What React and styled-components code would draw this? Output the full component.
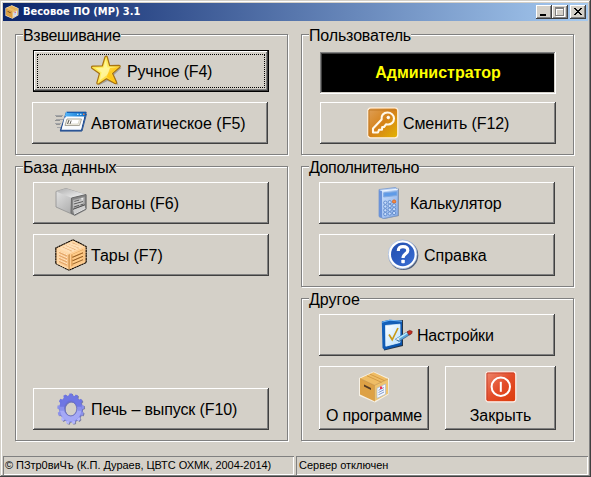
import React from "react";
import styled, { createGlobalStyle, css } from "styled-components";

const Global = createGlobalStyle`
  html, body { margin: 0; padding: 0; background: #d4d0c8; overflow: hidden; }
  * { box-sizing: border-box; }
`;

const Window = styled.div`
  width: 591px;
  height: 477px;
  padding: 3px;
  display: flex;
  flex-direction: column;
  background: #d4d0c8;
  color: #000;
  font-family: "Liberation Sans", Arial, sans-serif;
  font-size: 16px;
  line-height: 18px;
  white-space: nowrap;
  box-shadow: inset -1px -1px 0 #404040, inset 1px 1px 0 #d4d0c8,
    inset -2px -2px 0 #808080, inset 2px 2px 0 #fff;
`;

const TitleBar = styled.header`
  height: 18px;
  flex: none;
  display: flex;
  align-items: center;
  padding: 0 2px;
  background: linear-gradient(to right, #0a246a, #a6caf0);
`;

const Title = styled.h1`
  margin: 0 auto 0 4px;
  color: #fff;
  font: bold 11px/18px "DejaVu Sans Condensed", "DejaVu Sans", sans-serif;
  font-stretch: condensed;
`;

const raised = css`
  box-shadow: inset -1px -1px 0 #404040, inset 1px 1px 0 #fff, inset -2px -2px 0 #808080;
`;

const CaptionButton = styled.button`
  width: 16px;
  height: 14px;
  padding: 0;
  border: 0;
  margin-left: ${(p) => p.$gap || 0}px;
  background: #d4d0c8;
  display: flex;
  ${raised}
`;

const Body = styled.main`
  flex: 1;
  display: grid;
  grid-template-columns: 273px 273px;
  column-gap: 13px;
  padding: 13px 0 15px 12px;
`;

const Column = styled.div`
  display: flex;
  flex-direction: column;
  gap: 11px;
`;

const Group = styled.section`
  height: ${(p) => p.$h}px;
  display: flex;
  flex-direction: column;
  align-items: flex-start;
  border: 1px solid #808080;
  box-shadow: 1px 1px 0 #fff, inset 1px 1px 0 #fff;
  padding: 0 0 10px ${(p) => p.$left || 17}px;
`;

const GroupCaption = styled.h2`
  margin: -8px 0 5px ${(p) => p.$shift ?? -10}px;
  font-size: 16px;
  font-weight: normal;
  line-height: 18px;
  background: #d4d0c8;
  letter-spacing: ${(p) => p.$ls || 0}px;
`;

const PushButton = styled.button`
  width: 236px;
  height: 42px;
  flex: none;
  display: flex;
  align-items: center;
  gap: ${(p) => p.$gap || 4}px;
  border: 0;
  padding: 0 0 0 ${(p) => p.$pad}px;
  margin: ${(p) => p.$mt || 0} 0 0 ${(p) => p.$ml || 0}px;
  background: #d4d0c8;
  color: #000;
  font: inherit;
  letter-spacing: ${(p) => p.$ls || 0}px;
  ${raised}
  ${(p) =>
    p.$default &&
    css`
      border: 1px solid #000;
      outline: 1px dotted #000;
      outline-offset: -5px;
    `}
`;

const ButtonText = styled.span`
  padding-top: 2px;
`;

const TileButton = styled(PushButton)`
  width: ${(p) => p.$w}px;
  height: 64px;
  flex-direction: column;
  gap: 2px;
  padding: 5px 0 0;
`;

const TileRow = styled.div`
  display: flex;
  gap: 16px;
  margin-top: 10px;
`;

const UserPanel = styled.output`
  width: 236px;
  height: 42px;
  margin: 2px 0 8px;
  display: flex;
  align-items: center;
  justify-content: center;
  background: #000;
  color: #ff0;
  font-weight: bold;
  box-shadow: inset -1px -1px 0 #fff, inset 1px 1px 0 #808080,
    inset -2px -2px 0 #d4d0c8, inset 2px 2px 0 #404040;
`;

const StatusBar = styled.footer`
  height: 18px;
  flex: none;
  display: grid;
  grid-template-columns: 291px 1fr;
  column-gap: 2px;
  font-size: 11px;
`;

const StatusCell = styled.span`
  padding-left: ${(p) => p.$pad}px;
  line-height: 19px;
  letter-spacing: ${(p) => p.$ls || 0}px;
  box-shadow: inset 1px 1px 0 #808080, inset -1px -1px 0 #fff;
`;

const IconSvg = styled.svg`
  flex: none;
  display: block;
`;

const Icon = ({ size = 32, children }) => (
  <IconSvg width={size} height={size} viewBox="0 0 32 32" aria-hidden="true">
    {children}
  </IconSvg>
);

const Gradient = ({ id, from, mid, to, x2 = 1, y2 = 1 }) => (
  <linearGradient id={id} x1="0" y1="0" x2={x2} y2={y2}>
    <stop offset="0" stopColor={from} />
    {mid && <stop offset=".5" stopColor={mid} />}
    <stop offset="1" stopColor={to} />
  </linearGradient>
);

const StarIcon = () => (
  <Icon>
    <defs><Gradient id="star" from="#ffe53c" mid="#ffee60" to="#ffb400" /></defs>
    <path d="M17 2.5 21 12 31.5 12.8 24 20 28.5 30 17.5 26 8.5 30.5 10 20 3 14 13 13Z" fill="#777" opacity=".55" />
    <path d="M15.8 1.2Q16.8 .8 17.3 2L19.6 10.6 29 10.4Q31 10.8 29.8 12.2L22.6 18.4 26.6 27.2Q26.8 29.2 24.8 28.4L16.5 23.8 8.6 29Q6.6 29.4 6.9 27.6L9.4 18.6 1.8 13.2Q.8 11.4 2.8 11.1L12.3 11 15 2Z" fill="url(#star)" stroke="#a87310" strokeWidth="1.2" strokeLinejoin="round" />
    <path d="M15.8 4 17.4 12.4 26 12.4 19 17.2 16.5 20.5 9.6 25.6 11.6 17.6 5.4 13 13.6 12.8Z" fill="#fffbc0" opacity=".6" />
    <path d="M20 13 28 12.2 21.2 18.4 24.8 26.8 16.8 22Z" fill="#ffc30d" opacity=".75" />
  </Icon>
);

const WindowIcon = () => (
  <Icon>
    <defs><Gradient id="winbar" from="#55b7fb" to="#086bc5" y2={0} /></defs>
    <path d="M0 8.5h8M1 12.5h7M0 16.5h6M2 20.5h4" stroke="#a3a5a8" strokeWidth="1" />
    <path d="M1 9.5h6M0 13.5h5M1 17.5h4" stroke="#74777b" strokeWidth=".7" />
    <path d="M11.5 5.5H31L26.5 23.5H5.5Z" fill="#fff" stroke="#204c93" strokeWidth="1.3" strokeLinejoin="round" />
    <path d="M11 5H31L29.8 9.5H9.7Z" fill="url(#winbar)" />
    <path d="M12 5.4H31" stroke="#1459ad" />
    <path d="M22 7.3h1.5M25 7.3h1.5" stroke="#bde5ff" strokeWidth="1.3" />
    <path d="M28 7.3h1.5" stroke="#f47945" strokeWidth="1.5" />
    <path d="M9.5 10.5H28.8L26 22H7Z" fill="#f9fbfd" />
    <path d="M12 12H26.5L24.5 18.5H10Z" fill="#f1eee2" stroke="#aaa79c" />
    <path d="M14.5 12.5H24.5L23 17H13Z" fill="#fff" stroke="#d0cdbd" strokeWidth=".7" />
    <path d="M12.5 17 14 13M15 17 16.2 13.5" stroke="#625f59" />
    <path d="M5 24H27L31.5 7" fill="none" stroke="#365f98" />
  </Icon>
);

const ServerIcon = () => (
  <Icon>
    <defs>
      <Gradient id="srvside" from="#e5e5e5" to="#969696" />
      <Gradient id="srvtop" from="#adadad" to="#f9f9f9" />
    </defs>
    <path d="M1 4.5 11 1.5 31 8V22.5L20 28.5 1 20Z" fill="url(#srvside)" stroke="#909090" strokeWidth=".8" />
    <path d="M1 4.5 11 1.5 31 7.5 17 11Z" fill="url(#srvtop)" />
    <path d="M16.5 11 31 7.5V22L19.5 28 16 26Z" fill="#868686" stroke="#696969" />
    <path d="M18 13 29.5 10V17.5L18 22Z" fill="#b2b2b2" />
    <path d="M19.5 14.5 24 13.2M19 17 28 14.5M19 20 24 18.3M25.5 18 28.5 17" stroke="#5e5e5e" strokeWidth="1" />
    <path d="M18.5 15.8 28 13.2M18.5 18.4 28 15.8" stroke="#d6d6d6" strokeWidth=".8" />
    <path d="M18 22.5 30 18V21.5L19 26.7Z" fill="#cfcfcf" />
    <path d="M18 22.3 30 17.8" stroke="#505050" />
    <path d="M19 27.2 30.5 21.3" stroke="#e6e6e6" />
    <circle cx="27.2" cy="11.8" r="1" fill="#eee" />
  </Icon>
);

const CrateIcon = () => (
  <Icon>
    <path d="M18 .8 31.2 7.5V23.5L14 31.2.8 24.5V9Z" fill="#f7c48c" stroke="#100a04" strokeWidth="1.2" strokeDasharray="2.2 .4" />
    <path d="M2 9.3 18 1.8 30 8 14 15Z" fill="#ffdcae" />
    <path d="M6 9 18 3.6 26.5 8 14 13.2Z" fill="#e2a468" />
    <path d="M6 8.7 15.5 13M9 7.2 19 11.5M12 5.8 22.5 10M15 4.4 26 8.6" stroke="#ffe0b8" strokeWidth="2.1" />
    <path d="M2 9.5 14 15V30L2 24Z" fill="#fbc78f" />
    <path d="M4 13.5 12 17M4 16.5 12 20M4 19.5 12 23M4 22.5 12 26" stroke="#d89a5d" strokeWidth=".8" />
    <path d="M4 12 12 15.7M4 15 12 18.7M4 18 12 21.7M4 21 12 24.7" stroke="#ffe8c8" strokeDasharray="1.3 .6" />
    <path d="M3 10.5V24M2.2 9.8 14 15.3M2 24 14 29.7" stroke="#ffd9a8" strokeWidth="1.8" />
    <path d="M14.5 15 30 8.2V22.8L14.5 29.7Z" fill="#dc9c55" />
    <path d="M17.5 16.5 28 12M17.5 20 28 15.5M17.5 23.5 28 19M17.5 26 28 21.5" stroke="#ffcb88" strokeWidth="2" />
    <path d="M17.5 18.3 28 13.8M17.5 21.8 28 17.3M17.5 25.2 28 20.7" stroke="#8f5a22" strokeWidth=".9" />
    <path d="M15.5 15.3V29M29 9V23M15 15.2 30 8.5M15 29 30 22.5" stroke="#ffcf94" strokeWidth="1.5" />
    <path d="M14 15.5V30" stroke="#b8782f" strokeWidth=".8" />
  </Icon>
);

const GearIcon = () => {
  const teeth = Array.from({ length: 13 }, (_, i) => (i * 360) / 13);
  return (
    <Icon>
      <defs>
        <linearGradient id="gear" gradientUnits="userSpaceOnUse" x1="0" y1="1" x2="0" y2="31">
          <stop offset="0" stopColor="#6870e4" /><stop offset=".5" stopColor="#888eea" /><stop offset="1" stopColor="#b9bcff" />
        </linearGradient>
        <linearGradient id="gearback" gradientUnits="userSpaceOnUse" x1="0" y1="1" x2="0" y2="31">
          <stop offset="0" stopColor="#7076bd" /><stop offset="1" stopColor="#8285a8" />
        </linearGradient>
      </defs>
      {["gearback", "gear"].map((paint, layer) => (
        <g key={paint} transform={`translate(${layer ? 15.7 : 16.6} ${layer ? 15.8 : 16.4}) scale(.87 1)`}>
          <circle r="10" fill="none" stroke={`url(#${paint})`} strokeWidth="6.4"
            style={undefined} />
          {teeth.map((a) => (
            <path key={a} d="M-2.1-12.5-1.5-15.4H1.5L2.1-12.5Z" transform={`rotate(${a})`}
              fill={layer ? (Math.cos((a * Math.PI) / 180) > 0.2 ? "#6c74e5" : Math.cos((a * Math.PI) / 180) > -0.5 ? "#8b91eb" : "#b3b6fb") : "#777b9e"} />
          ))}
        </g>
      ))}
      <g transform="translate(15.7 15.8) scale(.87 1)">
        <path d="M-10-1A10 10 0 0 1 10-1" fill="none" stroke="#6f77e3" strokeWidth="5" />
        <path d="M-10 0A10 10 0 0 0 10 0" fill="none" stroke="#a5a9f6" strokeWidth="5" />
        <path d="M-10-2V2M10-2V2" stroke="#8b91ec" strokeWidth="5" />
      </g>
      <ellipse cx="15.8" cy="15.8" rx="5.9" ry="7.2" fill="none" stroke="#7376a9" strokeWidth=".7" />
    </Icon>
  );
};

const KeyIcon = () => (
  <Icon>
    <defs><Gradient id="key" from="#dfa15b" mid="#d58219" to="#e4b500" /></defs>
    <rect x=".8" y=".8" width="30" height="30" rx="3" fill="url(#key)" stroke="#fff1df" strokeWidth="1.3" />
    <path d="M2 29V3H29" fill="none" stroke="#bc741f" strokeWidth=".8" />
    <path d="M14.6 12.5 6 21.5V25.5H11L12 22.8H15L15.2 20H17L19.2 17.2C24 18.5 27 15 27 11.5 27 8 24 5.5 20.5 5.5 16.5 5.5 14 8.5 14.6 12.5Z" fill="none" stroke="#fff8ea" strokeWidth="2.1" strokeLinejoin="round" />
    <circle cx="21.3" cy="10.5" r="1.3" fill="#fff" stroke="#fff" />
  </Icon>
);

const CalculatorIcon = () => (
  <Icon>
    <defs><Gradient id="calc" from="#d5e7ff" to="#83a9e6" /></defs>
    <path d="M7 3 26 1.5V29L11 32 6 30Z" fill="#666f83" opacity=".6" />
    <path d="M6 2.5 22.5.5 25 2.5V28.5L10.5 31.5 6 29.5Z" fill="url(#calc)" stroke="#7597cc" strokeWidth=".8" />
    <path d="M6 3 9 4.2V30.7L6 29.5Z" fill="#6b93d9" />
    <path d="M9 4 25 2.2" stroke="#eff7ff" />
    <path d="M10.7 5.8 24 4.5V8.5L10.7 10Z" fill="#5f9be8" stroke="#83abe0" />
    {[0, 1, 2, 3].map((r) => [0, 1, 2].map((c) => (
      <circle key={`${r}${c}`} cx={12.3 + c * 4.4} cy={15.7 + r * 3.8 - c * 0.55} r="1.65"
        fill={r === 0 && c === 2 ? "#f58a42" : "#c6dcfb"} stroke={r === 0 && c === 2 ? "#d7641f" : "#5d88ca"} strokeWidth=".9" />
    )))}
  </Icon>
);

const HelpIcon = () => (
  <Icon>
    <defs><Gradient id="help" from="#244fae" mid="#2b5bc0" to="#3b70d5" /></defs>
    <circle cx="15.4" cy="16.2" r="14.9" fill="#52617d" />
    <circle cx="14.6" cy="15.3" r="14.4" fill="#fff" stroke="#9eb6df" strokeWidth=".7" />
    <circle cx="14.8" cy="15.4" r="11.8" fill="url(#help)" />
    <path d="M10.3 12C10.3 8.8 12.3 7.6 15 7.6 17.9 7.6 19.8 9.1 19.8 11.5 19.8 15 15 14.7 15 19" fill="none" stroke="#fff" strokeWidth="3.2" />
    <rect x="13.3" y="20.8" width="3.5" height="3.4" rx=".8" fill="#fff" />
  </Icon>
);

const SettingsIcon = () => (
  <Icon>
    <defs>
      <Gradient id="setpage" from="#fff" to="#b8e1ff" />
      <Gradient id="setframe" from="#1764bd" to="#0751aa" />
    </defs>
    <path d="M1 2.5 22 1V27L3 31.5Z" fill="#263343" />
    <path d="M.8 2.5 8.5.8 21 1.8V26L3.5 30.7 1.5 29Z" fill="url(#setframe)" />
    <path d="M1 3.2 9 1.2 21 2.2" fill="none" stroke="#73bafa" />
    <path d="M4.5 6.5 19 5.2V23.5L4.8 27.2Z" fill="url(#setpage)" stroke="#dff3ff" strokeWidth=".8" />
    <path d="M8 15.5 11.2 20.8 17 9" fill="none" stroke="#c99a17" strokeWidth="1.7" />
    <path d="M14.5 20.2 27 12.5 29.8 15 18 22.5Z" fill="#5ca5dc" stroke="#31577f" strokeWidth=".7" />
    <path d="M17 19.7 27 13.4" stroke="#b6ebff" strokeWidth="1.5" />
    <path d="M14.5 20.2 17 18.7 19 21.5Z" fill="#eee" />
    <path d="M26 13 28.5 11.4 31.2 12.3 30.8 14.5 28 16Z" fill="#c42c20" stroke="#7d221b" strokeWidth=".7" />
  </Icon>
);

const BoxIcon = ({ size }) => (
  <Icon size={size}>
    <path d="M15.5.5 31 7.3 30.5 23.5 17 31.5 1 24.8V7Z" fill="#f7f1e5" />
    <path d="M2 7.5 15.5 1.3 30 8 16.5 14.3Z" fill="#efbd65" />
    <path d="M2 7.5 16.5 14.3V30.3L2 23.5Z" fill="#dda145" />
    <path d="M16.5 14.3 30 8V22.7L16.5 30.3Z" fill="#efc46f" />
    <path d="M2 7.5 16.5 14.3 30 8M16.5 14.3V30.3" stroke="#c08a3c" strokeWidth=".6" fill="none" />
    <path d="M9 4.8 23.5 11.3M12 3.2 26.5 9.7" stroke="#c58b38" strokeWidth=".7" />
    <path d="M6 13.5 13 17V19L6 15.6Z" fill="#553b25" />
    <path d="M19 17.3 27.5 13V23.2L19 27.3Z" fill="#f5f9ff" stroke="#abbad3" strokeWidth=".7" />
    <path d="M20.5 19.3 26 16.5M20.5 21.5 26 18.7M20.5 23.8 26 21" stroke="#758fc6" strokeWidth=".9" />
    <path d="M22 15.5H24.2V18H22Z" fill="#ed3655" />
  </Icon>
);

const PowerIcon = () => (
  <Icon>
    <defs><Gradient id="power" from="#ee8970" mid="#e34c29" to="#dc3b09" /></defs>
    <rect x=".8" y=".8" width="30" height="30" rx="2.5" fill="url(#power)" stroke="#fff0e9" strokeWidth="1.2" />
    <path d="M2 29V2H29" fill="none" stroke="#bc321d" strokeWidth=".7" />
    <circle cx="15.8" cy="15.8" r="9.2" fill="none" stroke="#fff" strokeWidth="2" />
    <path d="M15.8 10.8V20.8" stroke="#fff" strokeWidth="2" />
  </Icon>
);

const Glyph = ({ children }) => (
  <IconSvg width="16" height="14" viewBox="0 0 16 14" shapeRendering="crispEdges" aria-hidden="true">{children}</IconSvg>
);

export default function App() {
  return (
    <>
      <Global />
      <Window>
        <TitleBar>
          <BoxIcon size={14} />
          <Title>Весовое ПО (МР) 3.1</Title>
          <CaptionButton aria-label="Свернуть"><Glyph><path d="M4 9h6v2H4z" /></Glyph></CaptionButton>
          <CaptionButton aria-label="Развернуть" disabled>
            <Glyph>
              <path d="M4 3h9v9H4z" fill="#fff" />
              <path d="M3 2h9v9H3zM4 4v6h7V4z" fill="#808080" fillRule="evenodd" />
              <path d="M5 5h6v5H5z" fill="#d4d0c8" />
            </Glyph>
          </CaptionButton>
          <CaptionButton aria-label="Закрыть окно" $gap={2}>
            <Glyph><path d="M4 3h2v1h1v1h2V4h1V3h2v1h-1v1h-1v1H9v1h1v1h1v1h1v1h-2V9H9V8H7v1H6v1H4V9h1V8h1V7h1V6H6V5H5V4H4z" /></Glyph>
          </CaptionButton>
        </TitleBar>
        <Body>
          <Column>
            <Group $h={121}>
              <GroupCaption $ls={-0.3}>Взвешивание</GroupCaption>
              <PushButton $default $pad={56} $gap={5} $ls={-0.2}><StarIcon /><ButtonText>Ручное (F4)</ButtonText></PushButton>
              <PushButton $pad={23} $ml={-1} $mt="10px"><WindowIcon /><ButtonText>Автоматическое (F5)</ButtonText></PushButton>
            </Group>
            <Group $h={275}>
              <GroupCaption $ls={-0.18}>База данных</GroupCaption>
              <PushButton $pad={22}><ServerIcon /><ButtonText>Вагоны (F6)</ButtonText></PushButton>
              <PushButton $pad={22} $mt="10px" $ls={-0.05}><CrateIcon /><ButtonText>Тары (F7)</ButtonText></PushButton>
              <PushButton $pad={22} $mt="auto" $ls={-0.12}><GearIcon /><ButtonText>Печь – выпуск (F10)</ButtonText></PushButton>
            </Group>
          </Column>
          <Column>
            <Group $h={121} $left={18}>
              <GroupCaption $shift={-11} $ls={-0.15}>Пользователь</GroupCaption>
              <UserPanel>Администратор</UserPanel>
              <PushButton $pad={47} $ls={-0.1}><KeyIcon /><ButtonText>Сменить (F12)</ButtonText></PushButton>
            </Group>
            <Group $h={121}>
              <GroupCaption $ls={-0.4}>Дополнительно</GroupCaption>
              <PushButton $pad={54} $gap={5} $ls={-0.2}><CalculatorIcon /><ButtonText>Калькулятор</ButtonText></PushButton>
              <PushButton $pad={69} $mt="10px"><HelpIcon /><ButtonText>Справка</ButtonText></PushButton>
            </Group>
            <Group $h={143}>
              <GroupCaption>Другое</GroupCaption>
              <PushButton $pad={62} $ls={-0.2}><SettingsIcon /><ButtonText>Настройки</ButtonText></PushButton>
              <TileRow>
                <TileButton $w={110} $ls={-0.15}><BoxIcon /><ButtonText>О программе</ButtonText></TileButton>
                <TileButton $w={111}><PowerIcon /><ButtonText>Закрыть</ButtonText></TileButton>
              </TileRow>
            </Group>
          </Column>
        </Body>
        <StatusBar>
          <StatusCell $pad={2} $ls={-0.05}>© ПЗтр0виЧъ (К.П. Дураев, ЦВТС ОХМК, 2004-2014)</StatusCell>
          <StatusCell $pad={3}>Сервер отключен</StatusCell>
        </StatusBar>
      </Window>
    </>
  );
}
